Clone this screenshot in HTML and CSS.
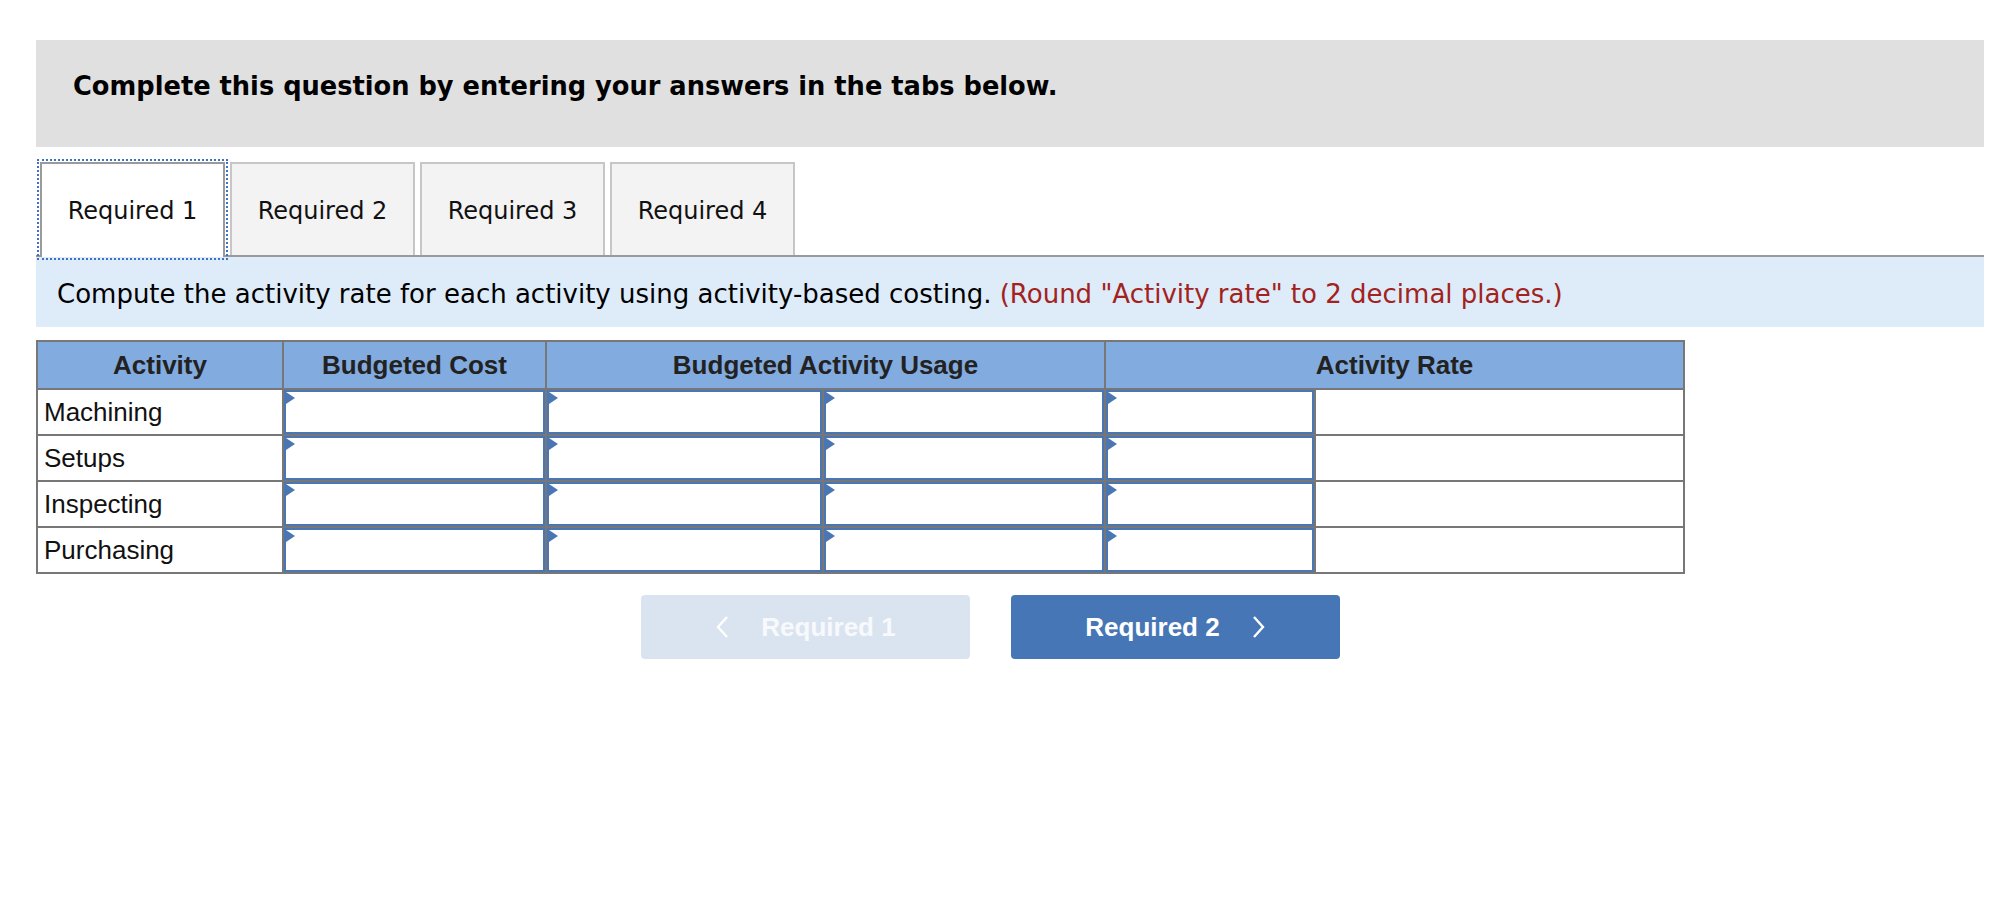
FILE: index.html
```html
<!DOCTYPE html>
<html>
<head>
<meta charset="utf-8">
<title>Required 1</title>
<link rel="stylesheet" href="styles.css">
</head>
<body>
<div class="banner">Complete this question by entering your answers in the tabs below.</div>
<div class="tabs">
  <div class="tab active">Required 1</div>
  <div class="tab">Required 2</div>
  <div class="tab">Required 3</div>
  <div class="tab">Required 4</div>
</div>
<div class="prompt">Compute the activity rate for each activity using activity-based costing. <span class="note">(Round "Activity rate" to 2 decimal places.)</span></div>
<table class="grid">
  <colgroup>
    <col class="c1"><col class="c2"><col class="c3"><col class="c4"><col class="c5"><col class="c6">
  </colgroup>
  <thead>
    <tr><th>Activity</th><th>Budgeted Cost</th><th colspan="2">Budgeted Activity Usage</th><th colspan="2">Activity Rate</th></tr>
  </thead>
  <tbody>
    <tr><td class="label">Machining</td><td class="in"><div class="field"></div></td><td class="in"><div class="field"></div></td><td class="in"><div class="field"></div></td><td class="in"><div class="field"></div></td><td></td></tr>
    <tr><td class="label">Setups</td><td class="in"><div class="field"></div></td><td class="in"><div class="field"></div></td><td class="in"><div class="field"></div></td><td class="in"><div class="field"></div></td><td></td></tr>
    <tr><td class="label">Inspecting</td><td class="in"><div class="field"></div></td><td class="in"><div class="field"></div></td><td class="in"><div class="field"></div></td><td class="in"><div class="field"></div></td><td></td></tr>
    <tr><td class="label">Purchasing</td><td class="in"><div class="field"></div></td><td class="in"><div class="field"></div></td><td class="in"><div class="field"></div></td><td class="in"><div class="field"></div></td><td></td></tr>
  </tbody>
</table>
<div class="nav">
  <div class="btn prev"><svg class="chev" width="14" height="22" viewBox="0 0 14 22"><polyline points="12,1 3,11 12,21" fill="none" stroke="#ffffff" stroke-width="2.4"/></svg><span>Required 1</span></div>
  <div class="btn next"><span>Required 2</span><svg class="chev" width="14" height="22" viewBox="0 0 14 22"><polyline points="2,1 11,11 2,21" fill="none" stroke="#ffffff" stroke-width="2.4"/></svg></div>
</div>
</body>
</html>
```
FILE: styles.css
```css
body {
  margin: 40px 8px 0 36px;
  font-family: "DejaVu Sans", Verdana, sans-serif;
  background: #ffffff;
  color: #000000;
}

.banner {
  background: #e0e0e0;
  height: 107px;
  box-sizing: border-box;
  padding: 31px 0 0 37px;
  font-weight: bold;
  font-size: 25.7px;
  line-height: 30px;
}

.tabs {
  display: flex;
  gap: 5px;
  margin-top: 15px;
  padding-left: 4px;
  border-bottom: 2px solid #9a9a9a;
}

.tab {
  width: 185px;
  height: 93px;
  box-sizing: border-box;
  border: 2px solid #c6c6c6;
  border-bottom: none;
  background: #f3f3f3;
  display: flex;
  align-items: center;
  justify-content: center;
  padding-top: 2px;
  font-size: 24px;
  color: #111111;
}

.tab.active {
  background: #ffffff;
  border-color: #9a9a9a;
  height: 95px;
  margin-bottom: -2px;
  padding-top: 0;
  outline: 2px dotted #3f72c2;
  outline-offset: 1px;
}

.prompt {
  background: #deebf8;
  padding: 22px 21px 18px;
  font-size: 26px;
  line-height: 30px;
  color: #000000;
}

.note {
  color: #a2221d;
}

.grid {
  margin-top: 13px;
  border-collapse: collapse;
  table-layout: fixed;
  width: 1647px;
  font-family: "Liberation Sans", Arial, sans-serif;
  font-size: 26px;
}

.c1 { width: 246px; }
.c2 { width: 263px; }
.c3 { width: 277px; }
.c4 { width: 282px; }
.c5 { width: 210px; }
.c6 { width: 369px; }

.grid th,
.grid td {
  border: 2px solid #777777;
  padding: 0;
}

.grid th {
  background: #82abdf;
  color: #222222;
  font-weight: bold;
  height: 45px;
  padding-top: 1px;
  text-align: center;
}

.grid td {
  height: 44px;
  background: #ffffff;
}

.grid td.label {
  padding-left: 6px;
  color: #111111;
}

.field {
  position: relative;
  height: 44px;
  box-sizing: border-box;
  border: 2px solid #4a77b4;
}

.field::before {
  content: "";
  position: absolute;
  left: 0;
  top: 0;
  width: 0;
  height: 0;
  border-top: 6px solid transparent;
  border-bottom: 6px solid transparent;
  border-left: 9px solid #4a77b4;
}

.nav {
  display: flex;
  gap: 41px;
  margin-top: 21px;
  padding-left: 605px;
}

.btn {
  width: 329px;
  height: 64px;
  border-radius: 4px;
  display: flex;
  align-items: center;
  justify-content: center;
  gap: 32px;
  font-family: "Liberation Sans", Arial, sans-serif;
  font-weight: bold;
  font-size: 26px;
  color: #ffffff;
}

.btn.prev {
  background: #dae4f0;
  color: #f7f9fc;
}

.btn.next {
  background: #4676b6;
}

.chev {
  display: block;
}
```
